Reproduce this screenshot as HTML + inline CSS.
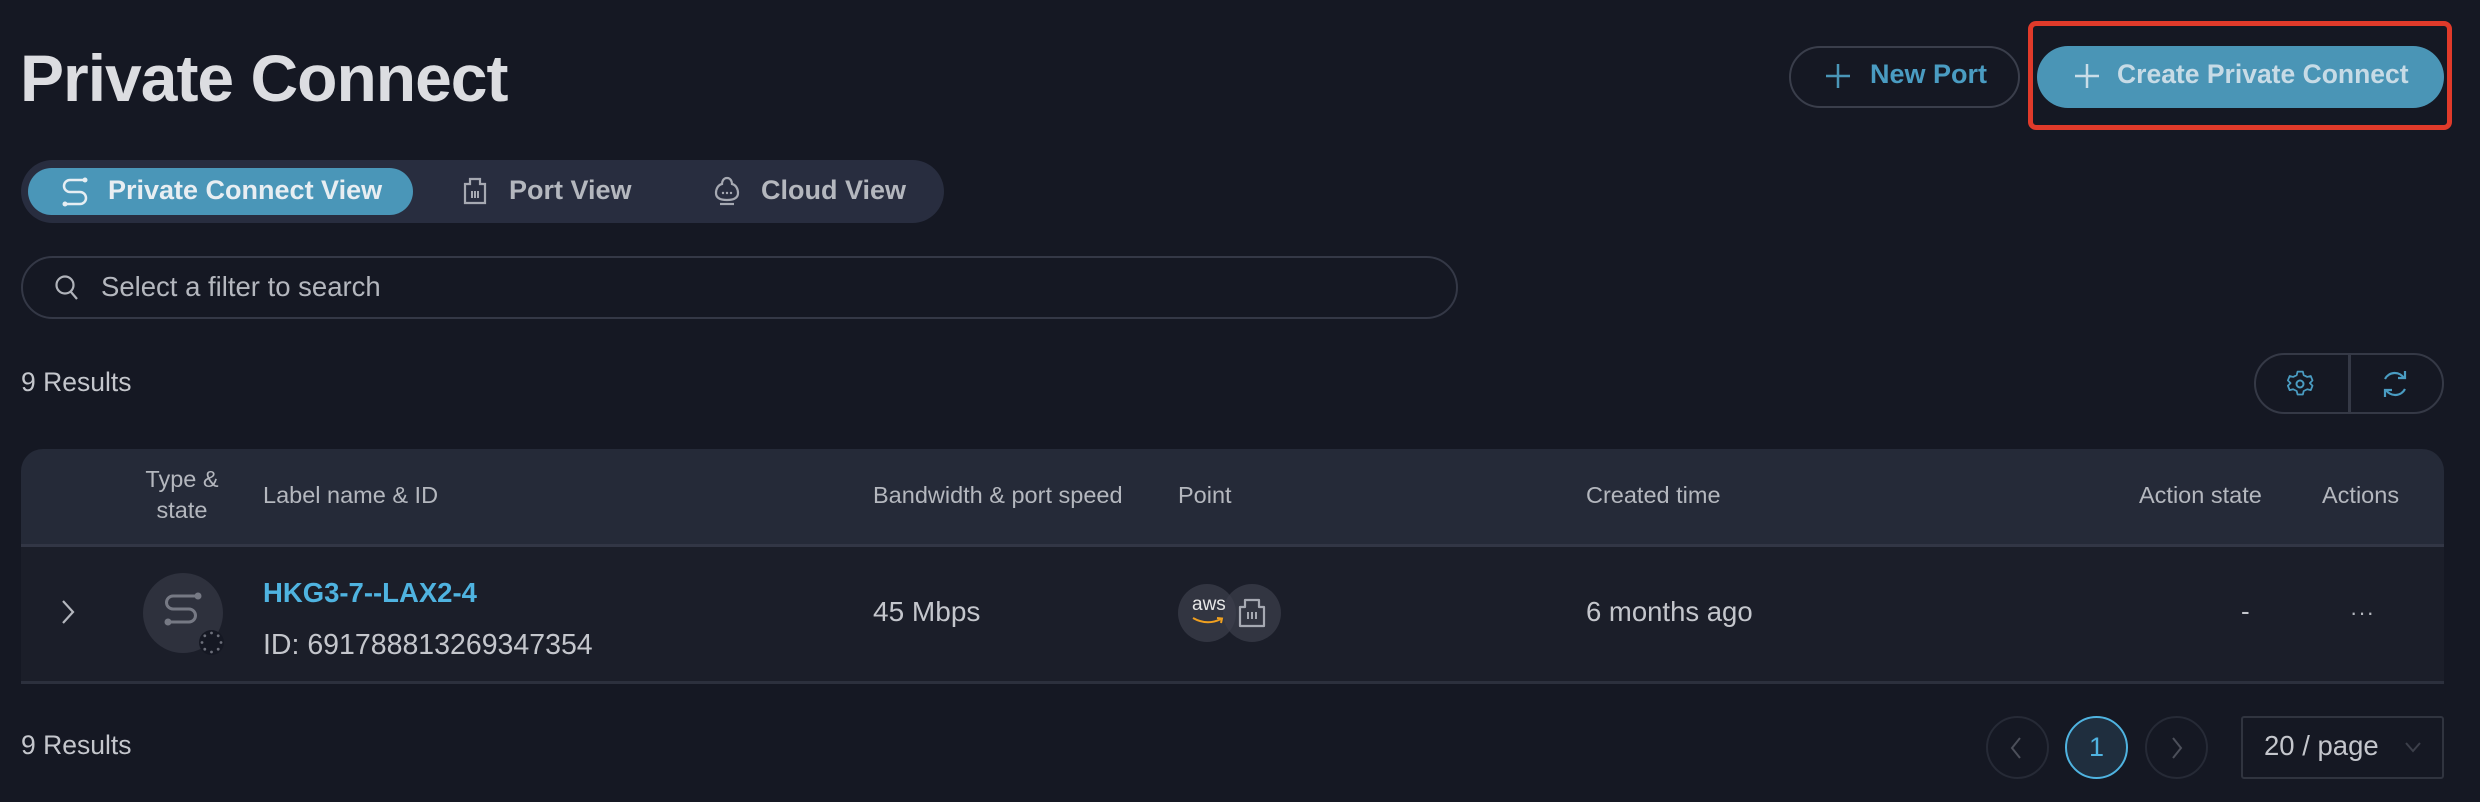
<!DOCTYPE html>
<html><head><meta charset="utf-8"><style>
*{margin:0;padding:0;box-sizing:border-box}
body{width:2480px;height:802px;background:#151823;font-family:"Liberation Sans",sans-serif;color:#d6d8dd;position:relative;overflow:hidden}
.a{position:absolute}
.t{white-space:nowrap}
</style></head><body>
<div class="a t" style="left:20px;top:40px;font-size:66px;font-weight:bold;color:#dcdde1;letter-spacing:-1px">Private Connect</div>

<div class="a" style="left:1789px;top:46px;width:231px;height:62px;border:2px solid #3a3e4b;border-radius:31px"></div>
<svg class="a" style="left:1823px;top:61px" width="30" height="30" viewBox="0 0 30 30"><path d="M15 3V27M3 15H27" stroke="#4a96b8" stroke-width="2.5"/></svg>
<div class="a t" style="left:1870px;top:59px;font-size:27px;font-weight:bold;color:#4a9cc2">New Port</div>

<div class="a" style="left:2028px;top:21px;width:424px;height:109px;border:5px solid #e03a2a;border-radius:8px"></div>
<div class="a" style="left:2037px;top:46px;width:407px;height:62px;background:#4a95b6;border-radius:31px"></div>
<svg class="a" style="left:2072px;top:61px" width="30" height="30" viewBox="0 0 30 30"><path d="M15 3V27M3 15H27" stroke="#c9dde8" stroke-width="2.5"/></svg>
<div class="a t" style="left:2117px;top:59px;font-size:26.5px;font-weight:bold;color:#c7dbe6">Create Private Connect</div>

<div class="a" style="left:21px;top:160px;width:923px;height:63px;background:#282d3f;border-radius:32px"></div>
<div class="a" style="left:28px;top:168px;width:385px;height:47px;background:#4a96b8;border-radius:24px"></div>
<svg class="a" style="left:60px;top:175px" width="30" height="32" viewBox="0 0 30 32"><path d="M25 5H10A6 6 0 0 0 10 17H20A6 6 0 0 1 20 29H5" fill="none" stroke="#e6eef3" stroke-width="2.5"/><circle cx="25" cy="5" r="2.5" fill="#e6eef3"/><circle cx="5" cy="29" r="2.5" fill="#e6eef3"/></svg>
<div class="a t" style="left:108px;top:175px;font-size:27px;font-weight:bold;color:#e8eef2">Private Connect View</div>
<svg class="a" style="left:461px;top:176px" width="28" height="30" viewBox="0 0 28 30"><path d="M4 8H9V3H19V8H24V27H4Z" fill="none" stroke="#a6a9b2" stroke-width="2.2"/><path d="M11 15V22M14 15V22M17 15V22" stroke="#a6a9b2" stroke-width="2"/></svg>
<div class="a t" style="left:509px;top:175px;font-size:27px;font-weight:bold;color:#b4b7be">Port View</div>
<svg class="a" style="left:712px;top:175px" width="30" height="32" viewBox="0 0 30 32"><path d="M15 3C11 3 10 7 10 9C6 10 4 14 4 18C4 23 8 25 15 25C22 25 26 23 26 18C26 14 24 10 20 9C20 7 19 3 15 3Z" fill="none" stroke="#a6a9b2" stroke-width="2.2"/><path d="M8 29H22" stroke="#a6a9b2" stroke-width="2.2"/><circle cx="11" cy="18" r="1.2" fill="#a6a9b2"/><circle cx="15" cy="18" r="1.2" fill="#a6a9b2"/><circle cx="19" cy="18" r="1.2" fill="#a6a9b2"/></svg>
<div class="a t" style="left:761px;top:175px;font-size:27px;font-weight:bold;color:#b4b7be">Cloud View</div>

<div class="a" style="left:21px;top:256px;width:1437px;height:63px;border:2px solid #343846;border-radius:32px"></div>
<svg class="a" style="left:54px;top:273px" width="26" height="30" viewBox="0 0 26 30"><circle cx="11" cy="12" r="8.5" fill="none" stroke="#b0b3ba" stroke-width="2.2"/><path d="M17 19L23 26" stroke="#b0b3ba" stroke-width="2.2"/></svg>
<div class="a t" style="left:101px;top:271px;font-size:27.5px;color:#b4b7be">Select a filter to search</div>

<div class="a t" style="left:21px;top:367px;font-size:26.5px;color:#c4c6cc">9 Results</div>

<div class="a" style="left:2254px;top:353px;width:190px;height:61px;border:2px solid #353946;border-radius:31px"></div>
<div class="a" style="left:2348px;top:354px;width:3px;height:59px;background:#353946"></div>
<svg class="a" style="left:2285px;top:368px" width="30" height="32" viewBox="0 0 30 32"><path d="M12 3H18L19 7L23 9L27 8L29 13L26 16L29 19L27 24L23 23L19 25L18 29H12L11 25L7 23L3 24L1 19L4 16L1 13L3 8L7 9L11 7Z" fill="none" stroke="#4a9cc2" stroke-width="2" stroke-linejoin="round" transform="translate(2 1) scale(.88)"/><circle cx="15" cy="16" r="3.5" fill="none" stroke="#4a9cc2" stroke-width="2"/></svg>
<svg class="a" style="left:2380px;top:367px" width="30" height="34" viewBox="0 0 30 34"><path d="M24 11A11 11 0 0 0 5 12M6 23A11 11 0 0 0 25 22" fill="none" stroke="#4a9cc2" stroke-width="2.2"/><path d="M25 4V11H18M5 30V23H12" fill="none" stroke="#4a9cc2" stroke-width="2.2"/></svg>

<div class="a" style="left:21px;top:449px;width:2423px;height:97px;background:#252a38;border-radius:22px 22px 0 0"></div>
<div class="a" style="left:21px;top:544px;width:2423px;height:3px;background:#323645"></div>
<div class="a" style="left:21px;top:547px;width:2423px;height:134px;background:#1b1e29"></div>
<div class="a" style="left:21px;top:681px;width:2423px;height:3px;background:#2c303d"></div>

<div class="a" style="left:132px;top:464px;width:100px;text-align:center;font-size:23.5px;line-height:31px;color:#b4b7be">Type &amp;<br>state</div>
<div class="a t" style="left:263px;top:482px;font-size:23.5px;color:#b4b7be">Label name &amp; ID</div>
<div class="a t" style="left:873px;top:482px;font-size:23.5px;color:#b4b7be">Bandwidth &amp; port speed</div>
<div class="a t" style="left:1178px;top:482px;font-size:23.5px;color:#b4b7be">Point</div>
<div class="a t" style="left:1586px;top:482px;font-size:23.5px;color:#b4b7be">Created time</div>
<div class="a t" style="left:2139px;top:482px;font-size:23.5px;color:#b4b7be">Action state</div>
<div class="a t" style="left:2322px;top:482px;font-size:23.5px;color:#b4b7be">Actions</div>

<svg class="a" style="left:60px;top:598px" width="16" height="28" viewBox="0 0 16 28"><path d="M3 3L13 14L3 25" fill="none" stroke="#b4b7be" stroke-width="2.2"/></svg>
<div class="a" style="left:143px;top:573px;width:80px;height:80px;border-radius:50%;background:#2e313d"></div>
<svg class="a" style="left:160px;top:592px" width="46" height="36" viewBox="0 0 46 36"><path d="M38 8H13A6.5 6.5 0 0 0 13 21H29A6.5 6.5 0 0 1 29 34H8" fill="none" stroke="#767984" stroke-width="3" transform="translate(0 -4)"/><circle cx="38" cy="4" r="3.5" fill="#767984"/><circle cx="8" cy="30" r="3.5" fill="#767984"/></svg>
<div class="a" style="left:199px;top:630px;width:25px;height:25px;border-radius:50%;background:#151823"></div>
<svg class="a" style="left:199px;top:630px" width="25" height="25" viewBox="0 0 25 25"><g fill="#6c6f7a"><circle cx="12.5" cy="3" r="1.4"/><circle cx="12.5" cy="22" r="1.4"/><circle cx="3" cy="12.5" r="1.4"/><circle cx="22" cy="12.5" r="1.4"/><circle cx="5.8" cy="5.8" r="1.4"/><circle cx="19.2" cy="5.8" r="1.4"/><circle cx="5.8" cy="19.2" r="1.4"/><circle cx="19.2" cy="19.2" r="1.4"/></g></svg>
<div class="a t" style="left:263px;top:577px;font-size:27.5px;font-weight:bold;color:#4fb3e0">HKG3-7--LAX2-4</div>
<div class="a t" style="left:263px;top:629px;font-size:28.5px;color:#c4c6cc">ID: 691788813269347354</div>
<div class="a t" style="left:873px;top:596px;font-size:28px;color:#c4c6cc">45 Mbps</div>
<div class="a" style="left:1178px;top:584px;width:58px;height:58px;border-radius:50%;background:rgba(60,63,75,.7)"></div>
<div class="a" style="left:1223px;top:584px;width:58px;height:58px;border-radius:50%;background:rgba(60,63,75,.7)"></div>
<div class="a t" style="left:1192px;top:594px;font-size:19px;color:#e6e6e6">aws</div>
<svg class="a" style="left:1191px;top:616px" width="34" height="10" viewBox="0 0 34 10"><path d="M2 2Q16 10 30 3M26 2L31 2.5L30 7" fill="none" stroke="#f0a020" stroke-width="2"/></svg>
<svg class="a" style="left:1236px;top:597px" width="32" height="32" viewBox="0 0 32 32"><path d="M4 10H9V3H23V10H28V29H4Z" fill="none" stroke="#a6a9b2" stroke-width="2.2" stroke-linejoin="round"/><path d="M12 15V22M16 15V22M20 15V22" stroke="#a6a9b2" stroke-width="2"/></svg>
<div class="a t" style="left:1586px;top:596px;font-size:27.5px;color:#c4c6cc">6 months ago</div>
<div class="a t" style="left:2241px;top:596px;font-size:26px;color:#c4c6cc">-</div>
<div class="a t" style="left:2350px;top:600px;font-size:22px;color:#b4b7be;letter-spacing:1px">···</div>

<div class="a t" style="left:21px;top:730px;font-size:26.5px;color:#c4c6cc">9 Results</div>
<div class="a" style="left:1986px;top:716px;width:63px;height:63px;border:2px solid #262a36;border-radius:50%"></div>
<svg class="a" style="left:2009px;top:735px" width="14" height="26" viewBox="0 0 14 26"><path d="M11 3L3 13L11 23" fill="none" stroke="#4c4f5a" stroke-width="2"/></svg>
<div class="a" style="left:2065px;top:716px;width:63px;height:63px;border:2px solid #4fb3e0;border-radius:50%;background:#1f2e3e;text-align:center;line-height:59px;font-size:27px;color:#4fb3e0">1</div>
<div class="a" style="left:2145px;top:716px;width:63px;height:63px;border:2px solid #262a36;border-radius:50%"></div>
<svg class="a" style="left:2170px;top:735px" width="14" height="26" viewBox="0 0 14 26"><path d="M3 3L11 13L3 23" fill="none" stroke="#4c4f5a" stroke-width="2"/></svg>
<div class="a" style="left:2241px;top:716px;width:203px;height:63px;border:2px solid #30343f;border-radius:3px"></div>
<div class="a t" style="left:2264px;top:730px;font-size:27.5px;color:#c4c6cc">20 / page</div>
<svg class="a" style="left:2404px;top:741px" width="18" height="12" viewBox="0 0 18 12"><path d="M2 2L9 10L16 2" fill="none" stroke="#3c3f4a" stroke-width="2"/></svg>
</body></html>
